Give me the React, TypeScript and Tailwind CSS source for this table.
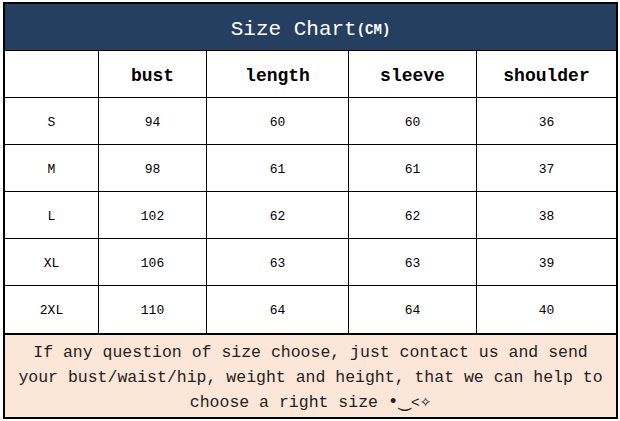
const rows = [
  ['S', '94', '60', '60', '36'],
  ['M', '98', '61', '61', '37'],
  ['L', '102', '62', '62', '38'],
  ['XL', '106', '63', '63', '39'],
  ['2XL', '110', '64', '64', '40'],
]

const widths = ['w-[94px]', 'w-[108px]', 'w-[142px]', 'w-[128px]', 'flex-1']

export default function App() {
  return (
    <div className="w-[620px] h-[421px] bg-white pt-[2px] pl-[3px]" style={{ fontFamily: '"Liberation Mono", "DejaVu Sans Mono", monospace' }}>
      <div className="w-[615px] border-[2px] border-black">
        <div className="h-[47px] bg-[#253f61] border-b border-black flex items-center justify-center text-white text-[21px] pt-[6px]">
          Size Chart<span className="text-[14px] font-bold">(CM)</span>
        </div>

        <div className="flex h-[47px] border-b border-black text-[18px] font-bold text-black">
          {['', 'bust', 'length', 'sleeve', 'shoulder'].map((h, i) => (
            <div key={i} className={`${widths[i]} ${i < 4 ? 'border-r border-black' : ''} flex items-center justify-center pt-[5px]`}>{h}</div>
          ))}
        </div>

        {rows.map((r, k) => (
          <div key={k} className={`flex h-[47px] text-[13px] text-black ${k < 4 ? 'border-b border-black' : ''}`}>
            {r.map((c, i) => (
              <div key={i} className={`${widths[i]} ${i < 4 ? 'border-r border-black' : ''} flex items-center justify-center pt-[3px]`}>{c}</div>
            ))}
          </div>
        ))}

        <div className="border-t-[2px] border-black bg-[#fce6d7] h-[84px] flex flex-col items-center justify-center pt-[4px] text-[16.5px] leading-[25px] text-[#222] text-center">
          <div>If any question of size choose, just contact us and send</div>
          <div>your bust/waist/hip, weight and height, that we can help to</div>
          <div>
            choose a right size <span className="text-[18px]">•</span><span className="text-[20px] leading-none">‿</span><span className="text-[15px]">&lt;</span><span className="text-[19px] leading-none">✧</span>
          </div>
        </div>
      </div>
    </div>
  )
}
